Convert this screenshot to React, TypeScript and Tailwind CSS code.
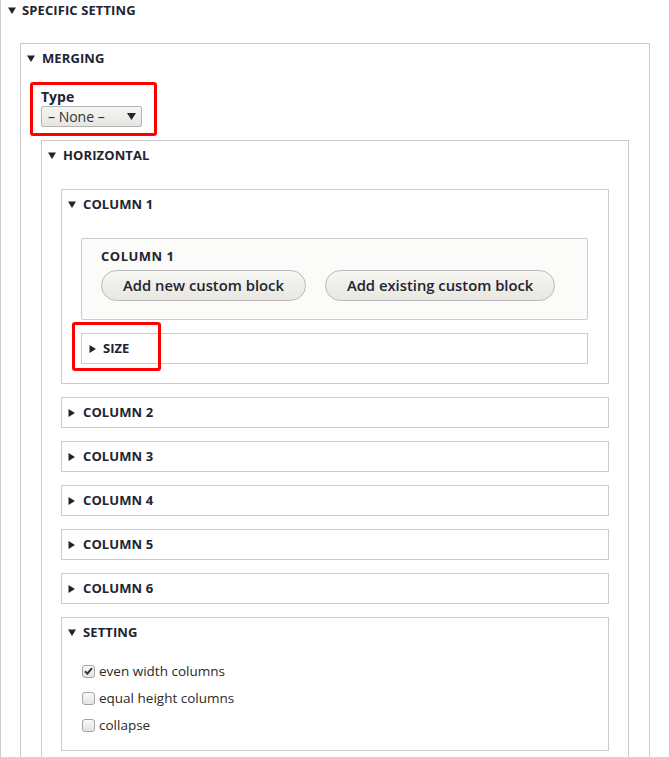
import React from "react";

const FONT = { fontFamily: '"Open Sans", "Noto Sans", Arial, sans-serif' };

function Tri({ open }: { open: boolean }) {
  return open ? (
    <svg width="8" height="7" viewBox="0 0 8 7" className="shrink-0">
      <path d="M0 0.5H8L4 7Z" fill="#222330" />
    </svg>
  ) : (
    <svg width="7" height="8" viewBox="0 0 7 8" className="shrink-0">
      <path d="M0.5 0L7 4L0.5 8Z" fill="#222330" />
    </svg>
  );
}

function Summary({ label, open }: { label: string; open: boolean }) {
  return (
    <div className="flex h-[29px] items-center pl-[6px]">
      <span className="flex w-[15px] items-center">
        <Tri open={open} />
      </span>
      <span className="text-[13px] font-bold uppercase leading-none tracking-[0.1px] text-[#222330]">
        {label}
      </span>
    </div>
  );
}

function Collapsed({ label }: { label: string }) {
  return (
    <div className="border border-[#cccccc] bg-white">
      <Summary label={label} open={false} />
    </div>
  );
}

function Btn({ children }: { children: React.ReactNode }) {
  return (
    <div className="flex h-[31px] items-center rounded-full border border-[#b9b9b9] bg-gradient-to-b from-[#f6f6f3] to-[#e8e7e1] px-[21px] text-[14.8px] font-semibold text-[#222330]">
      {children}
    </div>
  );
}

function Check({ checked, label }: { checked?: boolean; label: string }) {
  return (
    <div className="flex h-[20px] items-center">
      <span className="flex h-[13px] w-[13px] items-center justify-center rounded-[3px] border border-[#a5a5a5] bg-gradient-to-b from-[#fafafa] to-[#e3e3e3]">
        {checked && (
          <svg width="9" height="8" viewBox="0 0 9 8">
            <path d="M1 4.2L3.4 6.6L8 1.2" stroke="#333" strokeWidth="2" fill="none" />
          </svg>
        )}
      </span>
      <span className="ml-[4px] text-[13.5px] text-[#2a2a2a]">{label}</span>
    </div>
  );
}

export default function App() {
  return (
    <div className="relative h-[757px] w-[670px] overflow-hidden bg-white" style={FONT}>
      {/* Outer: SPECIFIC SETTING */}
      <div className="border-x border-b border-[#cccccc]">
        <div className="flex h-[20px] items-center pl-[7px]">
          <span className="flex w-[14px] items-center">
            <Tri open />
          </span>
          <span className="text-[13px] font-bold uppercase leading-none tracking-[0.1px] text-[#222330]">
            Specific setting
          </span>
        </div>
        <div className="px-[19px] pt-[23px]">
          {/* MERGING */}
          <div className="border border-[#cccccc]">
            <Summary label="Merging" open />
            <div className="px-[20px] pt-[15px]">
              <div className="h-[17px] text-[14px] font-bold leading-[17px] text-[#222330]">Type</div>
              <div className="mt-[1px] flex h-[21px] w-[101px] items-center justify-between rounded-[2px] border border-[#b5b5b5] bg-gradient-to-b from-[#f5f5f2] to-[#e6e6e1] pl-[6px] pr-[5px]">
                <span className="text-[14px] leading-none text-[#333333]">– None –</span>
                <svg width="9" height="7" viewBox="0 0 9 7">
                  <path d="M0 0H9L4.5 7Z" fill="#222330" />
                </svg>
              </div>

              {/* HORIZONTAL */}
              <div className="mt-[13px] border border-[#cccccc]">
                <Summary label="Horizontal" open />
                <div className="px-[19px] pb-[40px] pt-[19px]">
                  {/* COLUMN 1 */}
                  <div className="border border-[#cccccc]">
                    <Summary label="Column 1" open />
                    <div className="pb-[19px] pl-[19px] pr-[20px] pt-[19px]">
                      <div className="rounded-[2px] border border-[#cccccc] bg-[#fbfbf9] px-[19px] pb-[18px] pt-[9px]">
                        <div className="h-[17px] text-[13px] font-bold uppercase leading-[17px] tracking-[0.5px] text-[#222330]">
                          Column 1
                        </div>
                        <div className="mt-[5px] flex gap-[19px]">
                          <Btn>Add new custom block</Btn>
                          <Btn>Add existing custom block</Btn>
                        </div>
                      </div>
                      <div className="mt-[13px]">
                        <div className="border border-[#cccccc]">
                          <div className="flex h-[29px] items-center pl-[7px]">
                            <span className="flex w-[14px] items-center">
                              <Tri open={false} />
                            </span>
                            <span className="text-[13px] font-bold uppercase leading-none text-[#222330]">Size</span>
                          </div>
                        </div>
                      </div>
                    </div>
                  </div>

                  <div className="mt-[13px] flex flex-col gap-[13px]">
                    <Collapsed label="Column 2" />
                    <Collapsed label="Column 3" />
                    <Collapsed label="Column 4" />
                    <Collapsed label="Column 5" />
                    <Collapsed label="Column 6" />
                    {/* SETTING */}
                    <div className="border border-[#cccccc]">
                      <Summary label="Setting" open />
                      <div className="flex flex-col gap-[7px] pb-[15px] pl-[20px] pt-[14px]">
                        <Check checked label="even width columns" />
                        <Check label="equal height columns" />
                        <Check label="collapse" />
                      </div>
                    </div>
                  </div>
                </div>
              </div>
            </div>
          </div>
        </div>
      </div>

      {/* red highlight boxes */}
      <div className="pointer-events-none absolute left-[30px] top-[82px] h-[54px] w-[127px] rounded-[3px] border-[3px] border-[#ff0000]" />
      <div className="pointer-events-none absolute left-[72px] top-[322px] h-[49px] w-[89px] rounded-[3px] border-[3px] border-[#ff0000]" />
    </div>
  );
}
